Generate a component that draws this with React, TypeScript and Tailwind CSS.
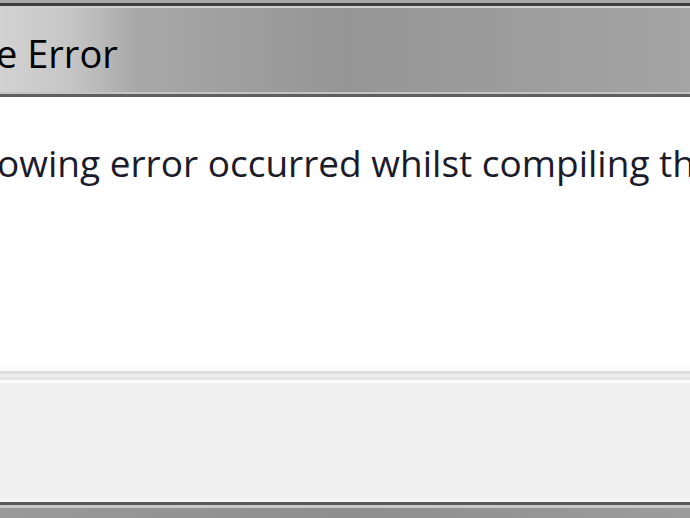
import React from "react";

const font = { fontFamily: '"Open Sans", "Noto Sans", sans-serif' };

export default function App() {
  return (
    <div className="w-[690px] h-[518px] overflow-hidden flex flex-col bg-[#f0f0f0]" style={font}>
      {/* window frame top */}
      <div className="h-[3px] bg-[#a9a9a9]" />
      <div className="h-[3px] bg-[#3c3c3c]" />
      <div className="h-[2px] bg-[#d2d2d2]" />

      {/* title bar */}
      <div className="h-[84px] flex items-center bg-gradient-to-r from-[#b4b4b4] via-[#959595] to-[#a4a4a4] overflow-hidden">
        <div className="h-full flex items-center pr-4 bg-gradient-to-r from-[#d2d2d2] via-[#c6c6c6] to-transparent">
          <span className="ml-[-4px] mt-[6px] whitespace-nowrap text-[38px] leading-none text-black">e Error</span>
        </div>
      </div>
      <div className="h-[2px] bg-[#c4c4c4]" />
      <div className="h-[3px] bg-[#5f5f5f]" />

      {/* content */}
      <div className="h-[270px] bg-white overflow-hidden">
        <p className="mt-[47px] ml-[-3px] whitespace-nowrap text-[37px] leading-none text-[#1b1b2a]">
          owing error occurred whilst compiling th
        </p>
      </div>

      {/* separator */}
      <div className="h-[4px] bg-[#f9f9f9]" />
      <div className="h-[3px] bg-[#dfdfdf]" />
      <div className="h-[3px] bg-[#eeeeee]" />
      <div className="h-[3px] bg-[#e3e3e3]" />
      <div className="h-[3px] bg-[#fafafa]" />

      {/* footer */}
      <div className="h-[116px] bg-[#f0f0f0]" />
      <div className="h-[3px] bg-[#f7f7f7]" />
      <div className="h-[3px] bg-[#5a5a5a]" />
      <div className="h-[3px] bg-[#c9c9c9]" />
      <div className="flex-1 bg-gradient-to-r from-[#9a9a9a] via-[#8e8e8e] to-[#9c9c9c]" />
    </div>
  );
}
